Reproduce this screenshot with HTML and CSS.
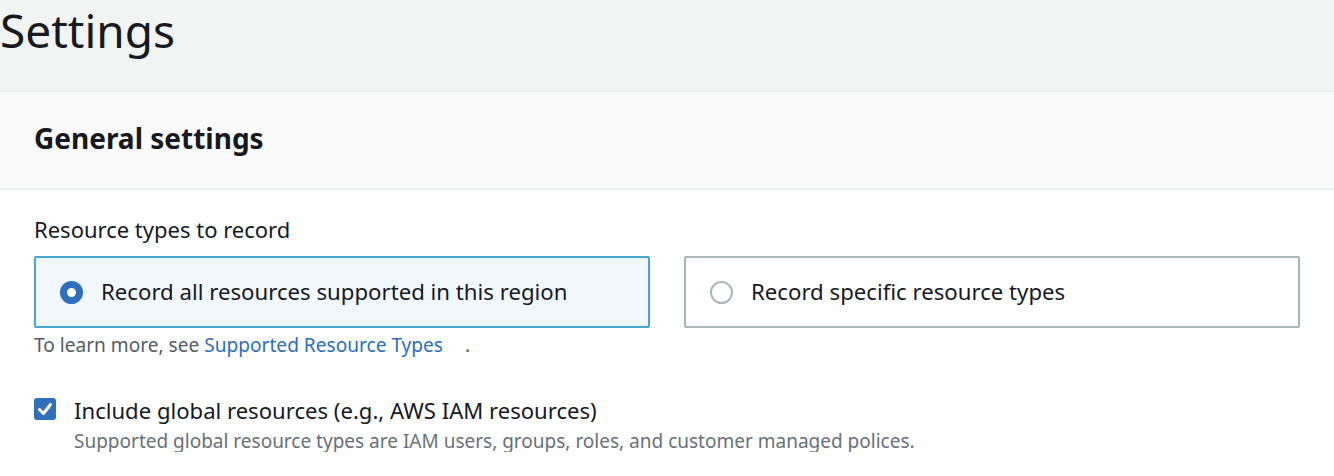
FILE: index.html
```html
<!DOCTYPE html>
<html lang="en">
<head>
<meta charset="utf-8">
<title>Settings</title>
<link rel="stylesheet" href="styles.css">
</head>
<body>
<header class="page-header">
  <h1 class="page-title">Settings</h1>
</header>
<section class="panel">
  <div class="panel-header">
    <h2 class="panel-title">General settings</h2>
  </div>
  <div class="panel-body">
    <div class="field-label">Resource types to record</div>
    <div class="tiles">
      <label class="tile tile-selected">
        <span class="radio radio-checked"></span>
        <span class="tile-text">Record all resources supported in this region</span>
      </label>
      <label class="tile">
        <span class="radio"></span>
        <span class="tile-text">Record specific resource types</span>
      </label>
    </div>
    <p class="help">To learn more, see <a class="link" href="#">Supported Resource Types</a><span class="icon-gap"></span>.</p>
    <div class="check-row">
      <span class="checkbox">
        <svg width="22" height="22" viewBox="0 0 22 22"><path d="M5.5 11.5 L9.5 15.5 L16.5 6.5" fill="none" stroke="#fff" stroke-width="3" stroke-linecap="round" stroke-linejoin="round"/></svg>
      </span>
      <div class="check-text">
        <div class="check-label">Include global resources (e.g., AWS IAM resources)</div>
        <div class="check-desc">Supported global resource types are IAM users, groups, roles, and customer managed polices.</div>
      </div>
    </div>
  </div>
</section>
</body>
</html>
```
FILE: styles.css
```css
html, body {
  margin: 0;
  padding: 0;
  background: #ffffff;
}
body {
  font-family: "Noto Sans", "Open Sans", Arial, sans-serif;
  color: #16191f;
}
.page-header {
  background: #f2f3f3;
  height: 90px;
  border-bottom: 2px solid #eaeded;
}
.page-title {
  margin: 0;
  font-size: 46px;
  line-height: 60px;
  font-weight: 400;
}
.panel-header {
  background: #fafafa;
  padding: 28px 34px 32px;
  border-bottom: 2px solid #eaeded;
}
.panel-title {
  margin: 0;
  font-size: 28px;
  line-height: 36px;
  font-weight: 700;
}
.panel-body {
  padding: 27px 34px 0;
}
.field-label {
  font-size: 22px;
  line-height: 24px;
}
.tiles {
  margin-top: 15px;
  display: grid;
  grid-template-columns: 1fr 1fr;
  gap: 34px;
}
.tile {
  height: 72px;
  box-sizing: border-box;
  border: 2px solid #aab7b8;
  border-radius: 2px;
  display: flex;
  align-items: center;
  padding-left: 24px;
  gap: 18px;
  background: #ffffff;
}
.tile-selected {
  border-color: #48a5d3;
  background: #f1f8fd;
}
.radio {
  width: 23px;
  height: 23px;
  box-sizing: border-box;
  border-radius: 50%;
  border: 2px solid #aab7b8;
  background: #fff;
  flex: none;
}
.radio-checked {
  border: 7px solid #2f6fbb;
}
.tile-text {
  font-size: 22.2px;
  line-height: 26px;
}
.help {
  margin: 6px 0 0;
  font-size: 19.1px;
  line-height: 22px;
  color: #545b64;
}
.link {
  color: #2a6ec3;
  text-decoration: none;
}
.icon-gap {
  display: inline-block;
  width: 22px;
}
.check-row {
  margin-top: 41px;
  display: flex;
  gap: 18px;
}
.checkbox {
  width: 22px;
  height: 22px;
  margin-top: 1px;
  border-radius: 3px;
  background: #2f6fbb;
  flex: none;
  display: block;
}
.checkbox svg {
  display: block;
}
.check-label {
  font-size: 22.1px;
  line-height: 26px;
}
.check-desc {
  margin-top: 7px;
  font-size: 19px;
  line-height: 22px;
  color: #687078;
}
```
